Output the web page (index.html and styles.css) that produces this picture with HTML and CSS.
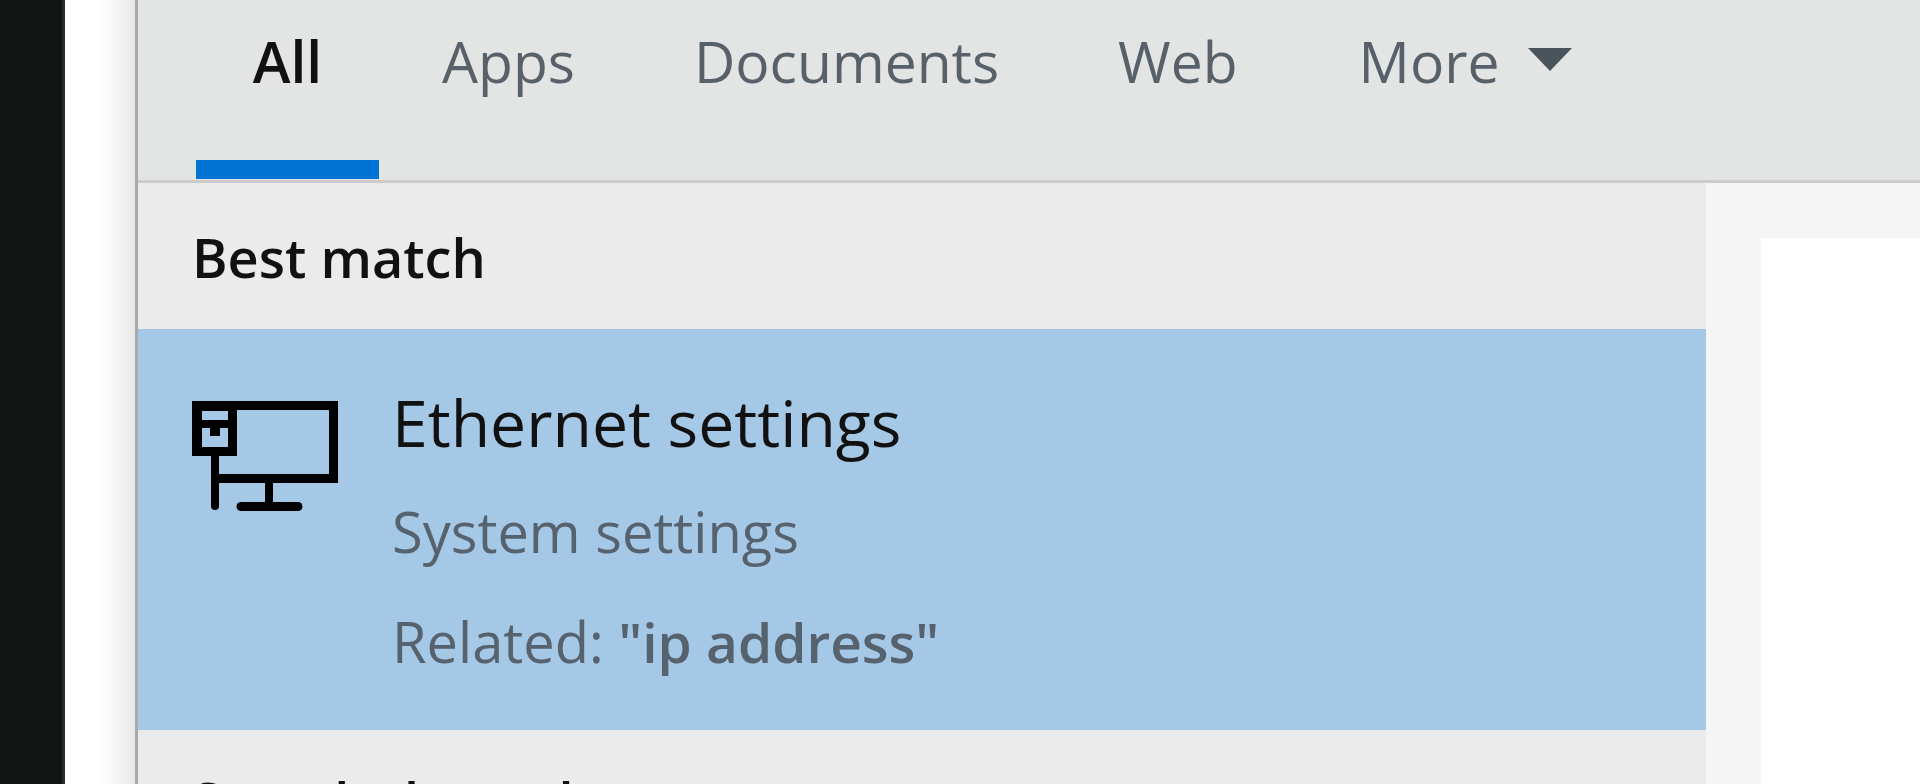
FILE: index.html
```html
<!DOCTYPE html>
<html lang="en">
<head>
    <meta charset="UTF-8">
    <title>Search - Ethernet settings</title>
    <link rel="stylesheet" href="styles.css">
</head>
<body>
    <div class="edge"></div>
    <div class="gutter"></div>
    <div class="panel">
        <div class="tabs">
            <div class="tab active">All</div>
            <div class="tab tab-apps">Apps</div>
            <div class="tab tab-docs">Documents</div>
            <div class="tab tab-web">Web</div>
            <div class="tab tab-more">More <span class="caret"></span></div>
        </div>
        <div class="content">
            <div class="results">
                <div class="heading">Best match</div>
                <div class="result">
                    <svg class="result-icon" width="146" height="111" viewBox="0 0 146 111">
                        <path fill="none" stroke="#000" stroke-width="9" d="M45 4.500H141.500V77.500H24"/>
                        <path fill="#000" fill-rule="evenodd" d="M0 0H45V55H0ZM10 10V19H36V10ZM10 27V46H36V27H28V35H18V27Z"/>
                        <path fill="none" stroke="#000" stroke-width="8" stroke-linecap="round" d="M23 55V105"/>
                        <path fill="none" stroke="#000" stroke-width="8" d="M77 80V104"/>
                        <path fill="none" stroke="#000" stroke-width="9" stroke-linecap="round" d="M49 105.500H106"/>
                    </svg>
                    <div class="result-text">
                        <div class="result-title">Ethernet settings</div>
                        <div class="result-sub">System settings</div>
                        <div class="result-rel">Related: <span class="keyword">"ip address"</span></div>
                    </div>
                </div>
                <div class="heading heading-next">Search the web</div>
            </div>
            <div class="preview">
                <div class="preview-card"></div>
            </div>
        </div>
    </div>
</body>
</html>
```

FILE: styles.css
```css
* {
    box-sizing: border-box;
}

html, body {
    margin: 0;
    height: 100%;
    overflow: hidden;
}

body {
    display: flex;
    background: #fff;
    font-family: "Open Sans", "Noto Sans", sans-serif;
}

.edge {
    width: 65px;
    background: #131515;
    border-right: 3px solid #2a2c2c;
}

.gutter {
    width: 70px;
    background: linear-gradient(to right, #fff 50%, #e8e8e8);
}

.panel {
    flex: 1;
    display: flex;
    flex-direction: column;
    min-height: 0;
    border-left: 3px solid #a9a9a9;
    filter: blur(0.6px);
}

/* tab strip */
.tabs {
    height: 183px;
    flex: none;
    display: flex;
    background: #e3e5e4;
    border-bottom: 3px solid #cbcbcb;
    padding-left: 58px;
    color: #58606a;
    font-size: 57px;
}

.tab {
    height: 180px;
    padding-top: 25px;
    line-height: 72px;
}

.active {
    width: 183px;
    height: 179px;
    text-align: center;
    color: #111;
    font-weight: 600;
    border-bottom: 19px solid #0074d4;
}

.tab-apps {
    margin-left: 63px;
}

.tab-docs {
    margin-left: 119px;
}

.tab-web {
    margin-left: 119px;
}

.tab-more {
    margin-left: 121px;
}

.caret {
    display: inline-block;
    margin-left: 14px;
    vertical-align: 12px;
    border-left: 22px solid transparent;
    border-right: 22px solid transparent;
    border-top: 23px solid #4a525a;
}

/* results */
.content {
    flex: 1;
    display: flex;
    min-height: 0;
}

.results {
    width: 1568px;
    overflow: hidden;
    background: #ebebeb;
}

.heading {
    height: 146px;
    padding: 40px 0 0 54px;
    font-size: 54px;
    line-height: 68px;
    font-weight: 600;
    color: #111;
}

.heading-next {
    padding-top: 37px;
}

.result {
    height: 401px;
    display: flex;
    padding: 72px 0 0 54px;
    background: #a5c8e6;
}

.result-icon {
    flex: none;
}

.result-text {
    margin: -24px 0 0 54px;
}

.result-title {
    font-size: 64.3px;
    line-height: 90px;
    color: #111;
}

.result-sub, .result-rel {
    font-size: 56px;
    line-height: 72px;
    color: #56626e;
}

.result-sub {
    margin-top: 28px;
}

.result-rel {
    margin-top: 38px;
}

.keyword {
    font-size: 55px;
    font-weight: 600;
}

/* right side */
.preview {
    flex: 1;
    padding: 55px 0 0 55px;
    background: #f5f5f5;
}

.preview-card {
    height: 100%;
    background: #fff;
}
```
